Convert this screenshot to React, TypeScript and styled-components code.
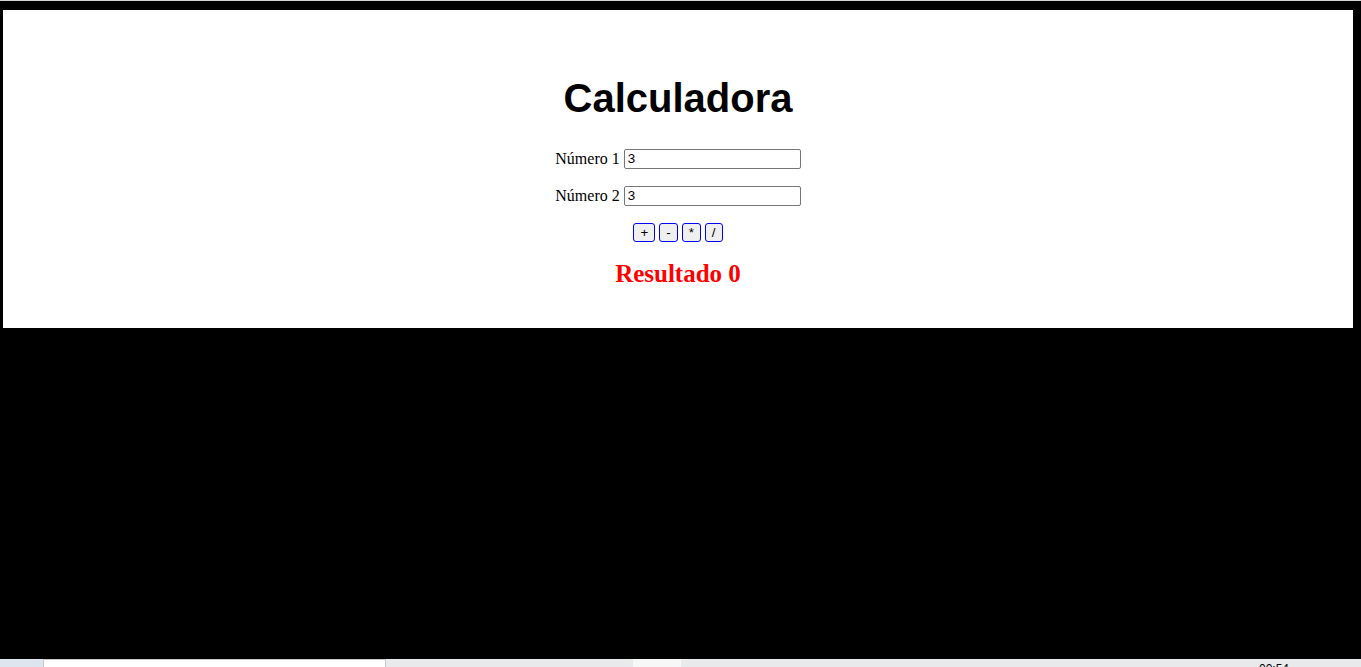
import styled, {createGlobalStyle} from 'styled-components';

const GlobalStyle = createGlobalStyle`
    html, body {
        margin: 0;
        padding: 0;
        background-color: #000000;
    }

    body {
        font-family: "Liberation Serif", "Times New Roman", serif;
    }
`;

const operations = ['+', '-', '*', '/'];

const App = () => {
    return (
        <>
            <GlobalStyle/>
            <Screen>
                <TopEdge/>
                <Stage>
                    <Panel>
                        <Title>Calculadora</Title>
                        <Form>
                            <Row>
                                <Label htmlFor="n1">Número 1</Label>
                                <NumberInput id="n1" type="text" defaultValue="3"/>
                            </Row>
                            <Row>
                                <Label htmlFor="n2">Número 2</Label>
                                <NumberInput id="n2" type="text" defaultValue="3"/>
                            </Row>
                            <ButtonRow>
                                {operations.map((op) => (
                                    <OpButton key={op}>{op}</OpButton>
                                ))}
                            </ButtonRow>
                        </Form>
                        <Result>Resultado 0</Result>
                    </Panel>
                </Stage>
                <Taskbar>
                    <StartArea/>
                    <SearchBox/>
                    <TaskArea $width={247}/>
                    <ActiveTask/>
                    <TaskArea $grow/>
                    <Clock>00:54</Clock>
                    <TaskArea $width={62}/>
                </Taskbar>
            </Screen>
        </>
    );
};

export default App;

// estilos
const Screen = styled.div`
    height: 667px;
    display: flex;
    flex-direction: column;
    background-color: #000000;
    overflow: hidden;
`;

const TopEdge = styled.div`
    height: 1px;
    background-color: #d6d6d6;
`;

const Stage = styled.div`
    flex: 1;
    padding: 9px 8px 0 3px;
`;

const Panel = styled.div`
    height: 318px;
    box-sizing: border-box;
    background-color: #ffffff;
    padding-top: 38px;
    display: flex;
    flex-direction: column;
    align-items: center;
`;

const Title = styled.h1`
    margin: 27px 0 0;
    font-family: "Liberation Sans", Arial, sans-serif;
    font-size: 40px;
    font-weight: bold;
    line-height: 46px;
    color: #000000;
`;

const Form = styled.div`
    margin-top: 27px;
    display: flex;
    flex-direction: column;
    align-items: center;
    gap: 16px;
`;

const Row = styled.div`
    height: 21px;
    display: flex;
    align-items: center;
    gap: 4px;
`;

const Label = styled.label`
    font-size: 16px;
    color: #000000;
`;

const NumberInput = styled.input`
    width: 177px;
    height: 20px;
    box-sizing: border-box;
    padding: 1px 3px;
    border: 1px solid #767676;
    border-radius: 2px;
    font-family: "Liberation Sans", Arial, sans-serif;
    font-size: 13.33px;
    color: #000000;
    background-color: #ffffff;
    outline: none;
`;

const ButtonRow = styled.div`
    height: 21px;
    display: flex;
    align-items: center;
    gap: 4px;
`;

const OpButton = styled.button`
    height: 19px;
    padding: 0 6px;
    border: 1px solid #0000ff;
    border-radius: 3px;
    background-color: #efefef;
    font-family: "Liberation Sans", Arial, sans-serif;
    font-size: 13.33px;
    line-height: 15px;
    color: #000000;
    cursor: pointer;
`;

const Result = styled.h2`
    margin: 16px 0 0;
    font-size: 25px;
    font-weight: bold;
    line-height: 29px;
    color: #ff0000;
`;

const Taskbar = styled.div`
    height: 8px;
    display: flex;
    background-color: #e6e9ed;
    overflow: hidden;
`;

const StartArea = styled.div`
    width: 43px;
    background-color: #dde5ef;
`;

const SearchBox = styled.div`
    width: 343px;
    box-sizing: border-box;
    border: 1px solid #c8c8c8;
    border-bottom: none;
    background-color: #ffffff;
`;

const TaskArea = styled.div<{ $grow?: boolean; $width?: number }>`
    width: ${({$width}) => ($width ? `${$width}px` : 'auto')};
    flex: ${({$grow}) => ($grow ? 1 : 'none')};
    background-color: #e8eaec;
`;

const ActiveTask = styled.div`
    width: 48px;
    background-color: #f7f7f7;
`;

const Clock = styled.div`
    width: 40px;
    padding-top: 4px;
    font-family: "Liberation Sans", Arial, sans-serif;
    font-size: 12px;
    line-height: 12px;
    color: #000000;
    background-color: #e8eaec;
`;
